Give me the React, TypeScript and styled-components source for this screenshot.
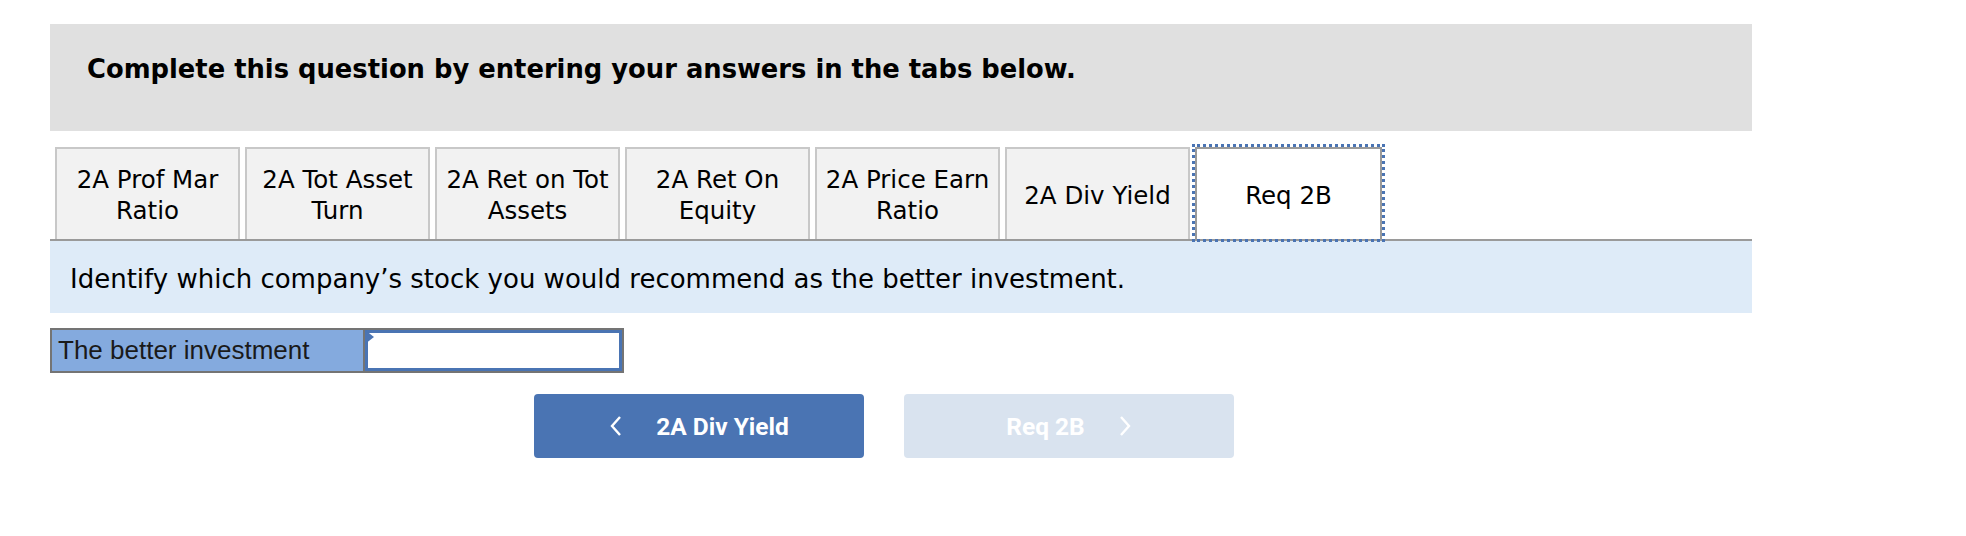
import * as React from "react"
import styled, { createGlobalStyle } from "styled-components"

const GlobalStyle = createGlobalStyle`
  body {
    margin: 0;
    background: #ffffff;
    font-family: "DejaVu Sans", Verdana, sans-serif;
    color: #000;
  }
`

const Page = styled.div`
  width: 1702px;
  padding: 24px 0 0 50px;
`

const Header = styled.div`
  background: #e0e0e0;
  height: 107px;
  box-sizing: border-box;
  padding: 30px 37px;
  font-weight: bold;
  font-size: 25.8px;
  line-height: 30px;
`

const TabBar = styled.div`
  display: flex;
  gap: 5px;
  margin-top: 16px;
  padding-left: 5px;
  border-bottom: 2px solid #9a9a9a;
`

const Tab = styled.div<{ $active?: boolean }>`
  width: ${(p) => (p.$active ? 187 : 185)}px;
  height: 92px;
  box-sizing: border-box;
  display: flex;
  align-items: center;
  justify-content: center;
  text-align: center;
  padding-top: 2px;
  font-size: 24.5px;
  line-height: 31px;
  background: ${(p) => (p.$active ? "#ffffff" : "#f2f2f2")};
  border: 2px solid ${(p) => (p.$active ? "#9a9a9a" : "#c8c8c8")};
  border-bottom: none;
  outline: ${(p) => (p.$active ? "3px dotted #4a74b3" : "none")};
  outline-offset: 0;
`

const Instruction = styled.div`
  background: #deebf8;
  height: 72px;
  box-sizing: border-box;
  display: flex;
  align-items: center;
  padding: 4px 0 0 20px;
  font-size: 26px;
`

const AnswerRow = styled.div`
  display: flex;
  margin-top: 15px;
  width: 574px;
  height: 45px;
  box-sizing: border-box;
  border: 2px solid #747474;
`

const AnswerLabel = styled.div`
  width: 313px;
  background: #84aade;
  border-right: 2px solid #747474;
  display: flex;
  align-items: center;
  padding-left: 6px;
  box-sizing: border-box;
  font-family: "Liberation Sans", Arial, sans-serif;
  font-size: 26px;
  color: #1a1a1a;
`

const AnswerInput = styled.div`
  position: relative;
  flex: 1;
  background: #ffffff;
  border: 3px solid #4a74b3;
`

const Marker = styled.span`
  position: absolute;
  top: -3px;
  left: -3px;
  width: 0;
  height: 0;
  border-top: 7px solid transparent;
  border-bottom: 7px solid transparent;
  border-left: 9px solid #4a74b3;
`

const NavRow = styled.div`
  display: flex;
  gap: 40px;
  margin-top: 21px;
  padding-left: 484px;
`

const NavButton = styled.div<{ $disabled?: boolean }>`
  width: 330px;
  height: 64px;
  border-radius: 4px;
  background: ${(p) => (p.$disabled ? "#d9e3ef" : "#4a74b3")};
  color: #ffffff;
  display: flex;
  align-items: center;
  justify-content: center;
  gap: 34px;
  font-family: Roboto, "Liberation Sans", sans-serif;
  font-weight: 700;
  font-size: 24.5px;
`

const Chevron = ({ dir }: { dir: "left" | "right" }) => (
  <svg width="13" height="22" viewBox="0 0 13 22">
    <path
      d={dir === "left" ? "M11 2 L3 11 L11 20" : "M2 2 L10 11 L2 20"}
      fill="none"
      stroke="#ffffff"
      strokeWidth="2.4"
    />
  </svg>
)

const tabs = [
  ["2A Prof Mar", "Ratio"],
  ["2A Tot Asset", "Turn"],
  ["2A Ret on Tot", "Assets"],
  ["2A Ret On", "Equity"],
  ["2A Price Earn", "Ratio"],
  ["2A Div Yield"],
]

export default function App() {
  return (
    <>
      <GlobalStyle />
      <Page>
        <Header>Complete this question by entering your answers in the tabs below.</Header>
        <TabBar>
          {tabs.map((t) => (
            <Tab key={t.join(" ")}>
              <div>
                {t.map((line) => (
                  <div key={line}>{line}</div>
                ))}
              </div>
            </Tab>
          ))}
          <Tab $active>Req 2B</Tab>
        </TabBar>
        <Instruction>
          Identify which company’s stock you would recommend as the better investment.
        </Instruction>
        <AnswerRow>
          <AnswerLabel>The better investment</AnswerLabel>
          <AnswerInput>
            <Marker />
          </AnswerInput>
        </AnswerRow>
        <NavRow>
          <NavButton>
            <Chevron dir="left" />
            <span>2A Div Yield</span>
          </NavButton>
          <NavButton $disabled>
            <span>Req 2B</span>
            <Chevron dir="right" />
          </NavButton>
        </NavRow>
      </Page>
    </>
  )
}
